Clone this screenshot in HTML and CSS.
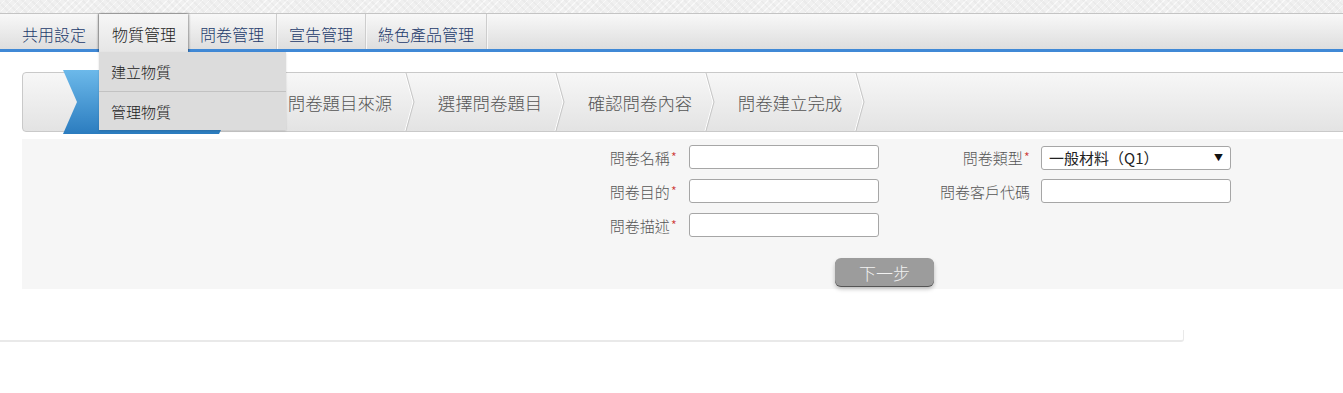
FILE: index.html
```html
<!DOCTYPE html>
<html lang="zh-Hant">
<head>
<meta charset="utf-8">
<title>問卷建立</title>
<link rel="stylesheet" href="styles.css">
</head>
<body>
<div class="topstrip"></div>
<nav class="menubar">
  <div class="menu-item">共用設定</div>
  <div class="menu-item active">物質管理
    <div class="dropdown">
      <div class="dd-item">建立物質</div>
      <div class="dd-item">管理物質</div>
    </div>
  </div>
  <div class="menu-item">問卷管理</div>
  <div class="menu-item">宣告管理</div>
  <div class="menu-item">綠色產品管理</div>
</nav>

<main class="content">
  <div class="steps">
    <div class="step-lead"></div>
    <div class="step current">
      <svg class="arrow" viewBox="0 0 172 62" preserveAspectRatio="none">
        <defs>
          <linearGradient id="blue" x1="0" y1="0" x2="0" y2="1">
            <stop offset="0" stop-color="#6cb9ea"/>
            <stop offset="1" stop-color="#2b7cbf"/>
          </linearGradient>
        </defs>
        <polygon points="0,0 156,0 172,31 156,62 0,62 14,31" fill="url(#blue)"/>
      </svg>
    </div>
    <div class="step first-plain"><span>問卷題目來源</span>
      <svg class="chev" viewBox="0 0 12 58" preserveAspectRatio="none"><polyline points="1,0 9,29 1,58" class="hl"/><polyline points="2,0 10,29 2,58" class="ln"/></svg>
    </div>
    <div class="step"><span>選擇問卷題目</span>
      <svg class="chev" viewBox="0 0 12 58" preserveAspectRatio="none"><polyline points="1,0 9,29 1,58" class="hl"/><polyline points="2,0 10,29 2,58" class="ln"/></svg>
    </div>
    <div class="step"><span>確認問卷內容</span>
      <svg class="chev" viewBox="0 0 12 58" preserveAspectRatio="none"><polyline points="1,0 9,29 1,58" class="hl"/><polyline points="2,0 10,29 2,58" class="ln"/></svg>
    </div>
    <div class="step"><span>問卷建立完成</span>
      <svg class="chev" viewBox="0 0 12 58" preserveAspectRatio="none"><polyline points="1,0 9,29 1,58" class="hl"/><polyline points="2,0 10,29 2,58" class="ln"/></svg>
    </div>
  </div>

  <form class="panel">
    <div class="grid">
      <label class="lbl">問卷名稱<span class="req">*</span></label>
      <input class="field" type="text">
      <label class="lbl lbl-r">問卷類型<span class="req">*</span></label>
      <div class="select-wrap">
        <select class="field select"><option>一般材料（Q1）</option></select>
        <span class="caret">▼</span>
      </div>

      <label class="lbl">問卷目的<span class="req">*</span></label>
      <input class="field" type="text">
      <label class="lbl lbl-r">問卷客戶代碼</label>
      <input class="field" type="text">

      <label class="lbl">問卷描述<span class="req">*</span></label>
      <input class="field" type="text">
    </div>
    <div class="actions">
      <button type="button" class="btn">下一步</button>
    </div>
  </form>
</main>

<div class="footer-edge"></div>
</body>
</html>
```

FILE: styles.css
```css
html { overflow-x: hidden; }
body {
  margin: 0;
  background: #fff;
  font-family: "Noto Sans CJK TC", "Noto Sans", "Liberation Sans", sans-serif;
  font-weight: 300;
  color: #333;
}

.topstrip {
  height: 13px;
  background-color: #f0f0f0;
  background-image:
    repeating-linear-gradient(45deg, rgba(0,0,0,0.025) 0 2px, transparent 2px 6px),
    repeating-linear-gradient(-45deg, rgba(255,255,255,0.6) 0 1px, transparent 1px 5px);
}

/* ---------- menu bar ---------- */
.menubar {
  display: flex;
  height: 35px;
  padding-left: 10px;
  border-top: 1px solid #c4c4c4;
  border-bottom: 3px solid #4089d6;
  background: linear-gradient(#f8f8f8, #dedede);
}
.menu-item {
  display: flex;
  align-items: center;
  padding: 4px 12px 0;
  font-size: 16px;
  color: #1c3a6b;
  border-right: 1px solid #cdcdcd;
  box-shadow: 1px 0 0 #f7f7f7;
  white-space: nowrap;
}
.menu-item.active {
  position: relative;
  height: 38px;
  box-sizing: border-box;
  margin-bottom: -3px;
  padding: 4px 12px 3px 13px;
  color: #222;
  border-right: none;
  background: linear-gradient(#f6f6f6, #e6e6e6);
  box-shadow: -1px 0 2px rgba(0,0,0,0.35), 1px 0 2px rgba(0,0,0,0.35);
  z-index: 2;
}
.dropdown {
  position: absolute;
  top: 100%;
  left: 0;
  width: 187px;
  background: #dcdcdc;
  box-shadow: 0 1px 2px rgba(0,0,0,0.15);
}
.dd-item {
  height: 39px;
  box-sizing: border-box;
  display: flex;
  align-items: center;
  padding-left: 12px;
  font-size: 15px;
  color: #222;
}
.dd-item + .dd-item {
  border-top: 1px solid #c2c2c2;
}

/* ---------- content ---------- */
.content {
  margin: 20px -30px 0 22px;
}

.steps {
  display: flex;
  height: 58px;
  border: 1px solid #c9c9c9;
  border-radius: 4px;
  background: linear-gradient(#f7f7f7, #e3e3e3);
}
.step-lead { width: 40px; flex: none; }
.step {
  position: relative;
  flex: none;
  width: 150px;
  display: flex;
  align-items: center;
  justify-content: center;
  font-size: 17.4px;
  color: #555;
}
.step.current {
  width: 172px;
}
.step.first-plain {
  width: 150px;
  margin-left: 30px;
}
.arrow {
  position: absolute;
  left: 0;
  top: -3px;
  width: 172px;
  height: 64px;
}
.chev {
  position: absolute;
  right: -1px;
  top: 0;
  width: 12px;
  height: 58px;
}
.chev polyline { fill: none; stroke-width: 1; }
.chev .ln { stroke: #c6c6c6; }
.chev .hl { stroke: #ffffff; }

/* ---------- form panel ---------- */
.panel {
  margin-top: 7px;
  padding: 6px 0 3px;
  background: #f6f6f6;
}
.grid {
  display: grid;
  grid-template-columns: 667px 190px 162px 190px;
  grid-auto-rows: 24px;
  row-gap: 10px;
}
.lbl {
  display: flex;
  align-items: center;
  justify-content: flex-end;
  padding-right: 12px;
  font-size: 15px;
  color: #555;
}
.lbl-r { padding-right: 11px; }
.req {
  color: #cc3333;
  font-size: 14px;
  margin-left: 1px;
}
.field {
  width: 190px;
  height: 24px;
  box-sizing: border-box;
  margin: 0;
  border: 1px solid #a6a6a6;
  border-radius: 3px;
  background: #fff;
  font-family: "Noto Sans CJK TC", "Noto Sans", sans-serif;
  font-weight: 300;
}
.select-wrap { position: relative; }
.select {
  appearance: none;
  -webkit-appearance: none;
  padding: 0 0 0 7px;
  font-size: 15px;
  font-weight: 400;
  color: #222;
  line-height: 22px;
}
.caret {
  position: absolute;
  right: 8px;
  top: 6px;
  font-size: 9px;
  color: #111;
  pointer-events: none;
}
.actions {
  display: flex;
  margin-top: 21px;
  padding-left: 813px;
}
.btn {
  width: 99px;
  height: 28px;
  border: none;
  border-radius: 6px;
  background: #9c9c9c;
  color: #f2f2f2;
  font-family: "Noto Sans CJK TC", "Noto Sans", sans-serif;
  font-weight: 300;
  font-size: 17px;
  padding: 0;
  box-shadow: 0 1px 0 #555, 0 3px 4px rgba(0,0,0,0.25);
}

.footer-edge {
  margin-top: 41px;
  width: 1183px;
  height: 10px;
  border-bottom: 2px solid #e9e9e9;
  border-right: 1px solid #e9e9e9;
  border-bottom-right-radius: 3px;
}
```
